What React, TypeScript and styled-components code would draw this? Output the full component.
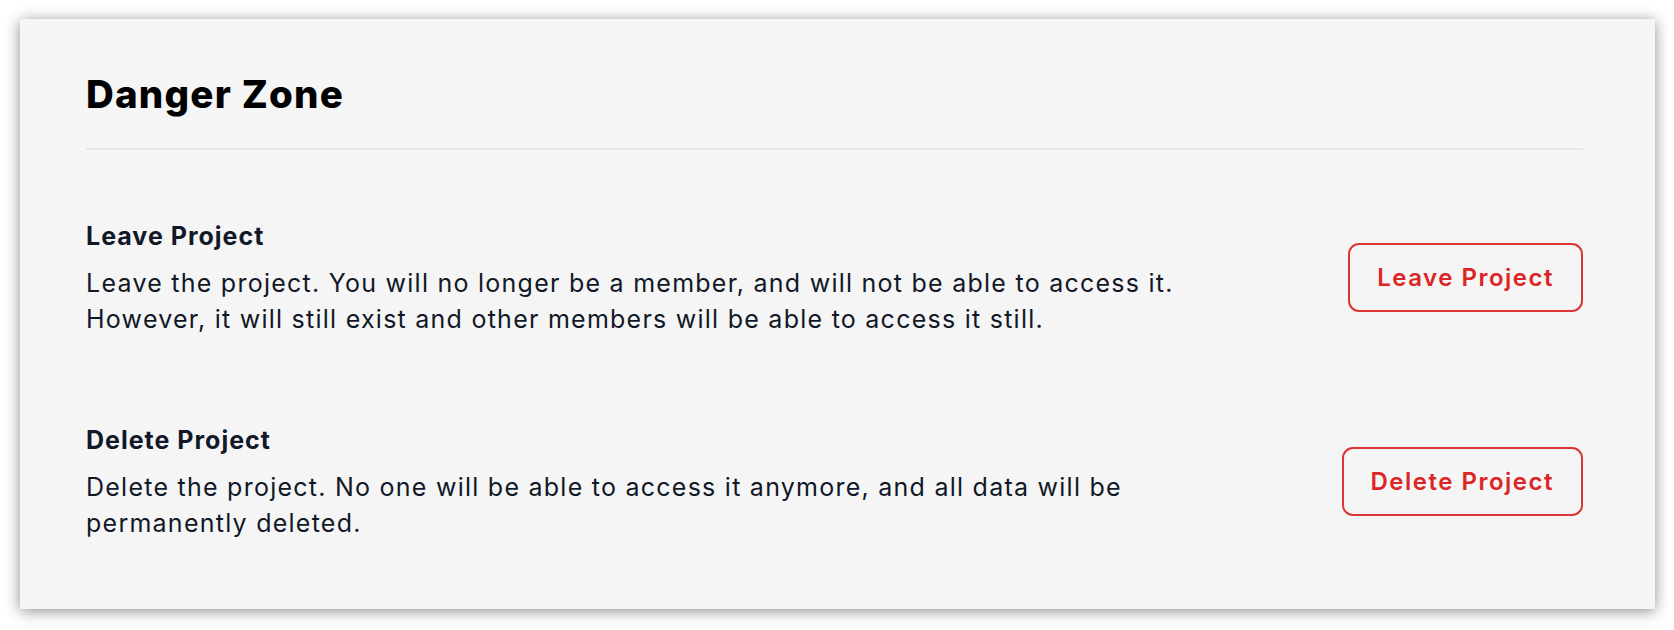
import styled, { createGlobalStyle } from "styled-components";

const GlobalStyle = createGlobalStyle`
  html, body {
    margin: 0;
    padding: 0;
    background: #ffffff;
  }
  body {
    font-family: Inter, "Noto Sans", "Liberation Sans", sans-serif;
    color: #111827;
  }
`;

const Page = styled.div`
  padding: 19px 19px 21px 20px;
`;

const Card = styled.section`
  height: 590px;
  box-sizing: border-box;
  padding: 51px 72px 0 66px;
  background: #f5f5f5;
  box-shadow: 0 2px 14px rgba(0, 0, 0, 0.45);
`;

const Title = styled.h2`
  margin: 0;
  font-size: 38.5px;
  line-height: 48px;
  font-weight: 800;
  color: #000000;
  letter-spacing: 1.2px;
`;

const Divider = styled.hr`
  margin: 30px 0 0;
  border: none;
  height: 2px;
  background: #e6e6ee;
`;

const Rows = styled.div`
  display: flex;
  flex-direction: column;
  gap: 85px;
  padding-top: 68px;
`;

const Row = styled.div`
  display: flex;
  align-items: center;
  justify-content: space-between;
  gap: 40px;
`;

const RowText = styled.div`
  display: flex;
  flex-direction: column;
  gap: 11px;
  max-width: 1150px;
`;

const RowTitle = styled.h3`
  margin: 0;
  font-size: 25px;
  line-height: 36px;
  font-weight: 700;
  color: #111827;
  letter-spacing: 1px;
`;

const RowDescription = styled.p`
  margin: 0;
  font-size: 25px;
  line-height: 36px;
  font-weight: 400;
  color: #111827;
  letter-spacing: 1.25px;
`;

const DangerButton = styled.button`
  flex-shrink: 0;
  padding: 15px 27px;
  font-family: inherit;
  font-size: 24px;
  line-height: 35px;
  font-weight: 600;
  letter-spacing: 1.5px;
  color: #dc2626;
  background: transparent;
  border: 2px solid #dc3535;
  border-radius: 11px;
  cursor: pointer;
`;

const actions = [
  {
    title: "Leave Project",
    text: "Leave the project. You will no longer be a member, and will not be able to access it. However, it will still exist and other members will be able to access it still.",
  },
  {
    title: "Delete Project",
    text: "Delete the project. No one will be able to access it anymore, and all data will be permanently deleted.",
  },
];

export default function App() {
  return (
    <>
      <GlobalStyle />
      <Page>
        <Card>
          <Title>Danger Zone</Title>
          <Divider />
          <Rows>
            {actions.map((a) => (
              <Row key={a.title}>
                <RowText>
                  <RowTitle>{a.title}</RowTitle>
                  <RowDescription>{a.text}</RowDescription>
                </RowText>
                <DangerButton>{a.title}</DangerButton>
              </Row>
            ))}
          </Rows>
        </Card>
      </Page>
    </>
  );
}
